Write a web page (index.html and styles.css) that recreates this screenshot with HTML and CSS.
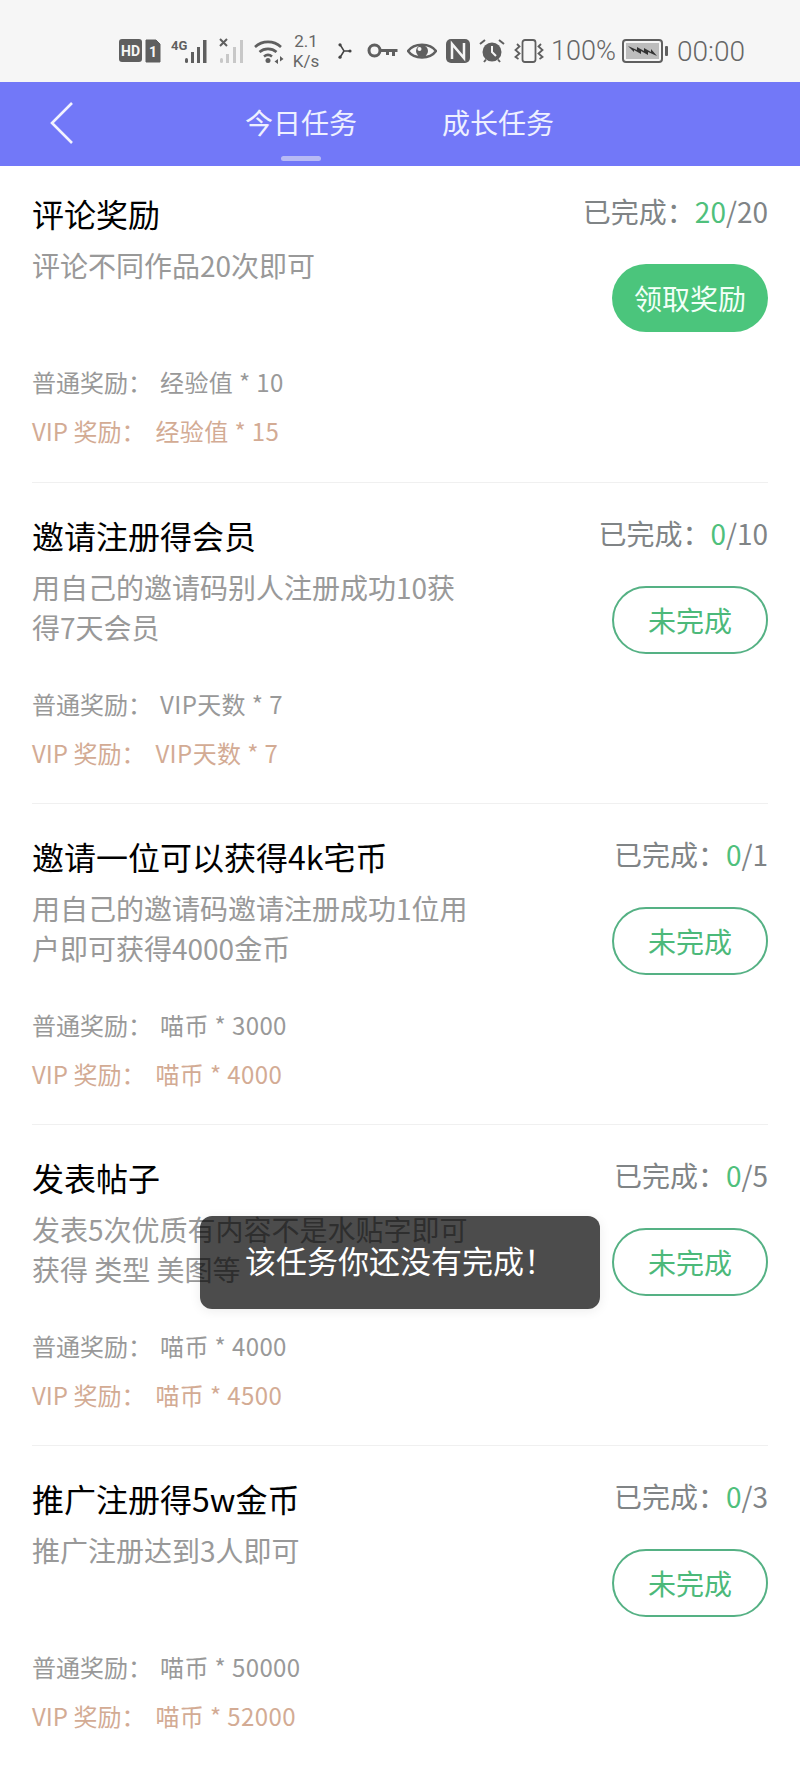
FILE: index.html
```html
<!DOCTYPE html>
<html lang="zh-CN">
<head>
  <meta charset="UTF-8">
  <title>任务</title>
  <link rel="stylesheet" href="styles.css">
</head>
<body>

  <div class="statusbar">
    <svg class="ic-hd" width="42" height="24" viewBox="0 0 42 24">
      <rect x="0" y="0" width="23" height="23" rx="3" fill="#5f5f5f"/>
      <text x="11.5" y="17" class="ic-text" font-size="14" fill="#f6f6f6" text-anchor="middle">HD</text>
      <path d="M27 1h10l4 4v18H27z" fill="#5f5f5f" stroke="#5f5f5f" stroke-linejoin="round"/>
      <text x="34" y="18" class="ic-text" font-size="14" fill="#f6f6f6" text-anchor="middle">1</text>
    </svg>
    <svg class="ic-sig" width="40" height="26" viewBox="0 0 40 26">
      <text x="0" y="12" class="ic-text" font-size="13" fill="#5f5f5f">4G</text>
      <rect x="14" y="20" width="3" height="5" rx="1.5" fill="#5f5f5f"/>
      <rect x="20" y="14" width="3" height="11" fill="#5f5f5f"/>
      <rect x="26" y="9" width="3" height="16" fill="#5f5f5f"/>
      <rect x="32" y="2" width="3.5" height="23" fill="#5f5f5f"/>
    </svg>
    <svg class="ic-sig2" width="27" height="26" viewBox="0 0 27 26">
      <path d="M1 1l7 7M8 1l-7 7" stroke="#5f5f5f" stroke-width="2"/>
      <rect x="1" y="20" width="3" height="5" rx="1.5" fill="#c8c8c8"/>
      <rect x="7" y="16" width="3" height="9" fill="#c8c8c8"/>
      <rect x="14" y="9" width="3" height="16" fill="#c8c8c8"/>
      <rect x="21" y="2" width="3" height="23" fill="#c8c8c8"/>
    </svg>
    <svg class="ic-wifi" width="30" height="26" viewBox="0 0 30 26">
      <path d="M1 9a19 19 0 0 1 26 0M5.500 14a13 13 0 0 1 17 0M10 18.500a6.500 6.500 0 0 1 8 0" fill="none" stroke="#5f5f5f" stroke-width="2.600"/>
      <circle cx="14" cy="22.500" r="2.500" fill="#5f5f5f"/>
      <path d="M24 21l-3.500 2.500 3.500 2.500zM26 18v5.500l3.500-2.500z" fill="#5f5f5f"/>
    </svg>
    <div class="net-speed"><span>2.1</span><span>K/s</span></div>
    <svg class="ic-branch" width="15" height="16" viewBox="0 0 15 16">
      <path d="M3 1.500l4 6.500h6M7 8l-4 6.500" fill="none" stroke="#444" stroke-width="1.500"/>
      <circle cx="3" cy="1.800" r="1.600" fill="#444"/>
      <circle cx="13" cy="8" r="1.600" fill="#444"/>
      <circle cx="3" cy="14.200" r="1.600" fill="#444"/>
    </svg>
    <svg class="ic-key" width="31" height="16" viewBox="0 0 31 16">
      <circle cx="7.500" cy="7.500" r="5.500" fill="none" stroke="#5f5f5f" stroke-width="3"/>
      <path d="M13 6h17.500v3H28v4h-3V9h-3v3h-3V9h-6z" fill="#5f5f5f"/>
    </svg>
    <svg class="ic-eye" width="30" height="20" viewBox="0 0 30 20">
      <path d="M1 10C7 1.500 23 1.500 29 10 23 18.500 7 18.500 1 10z" fill="none" stroke="#5f5f5f" stroke-width="2.500"/>
      <circle cx="15" cy="10" r="6" fill="#5f5f5f"/>
      <circle cx="12.500" cy="8" r="2" fill="#f6f6f6"/>
    </svg>
    <svg class="ic-nfc" width="24" height="24" viewBox="0 0 24 24">
      <rect width="24" height="24" rx="5" fill="#5f5f5f"/>
      <path d="M6 20V5l12 14V4" fill="none" stroke="#f6f6f6" stroke-width="2.500"/>
    </svg>
    <svg class="ic-alarm" width="26" height="24" viewBox="0 0 26 24">
      <circle cx="13" cy="13" r="9.500" fill="#5f5f5f"/>
      <path d="M1 5l5-4M25 5l-5-4M5 23l2-2.500M21 23l-2-2.500" stroke="#5f5f5f" stroke-width="2"/>
      <path d="M13 7v6l4 4" fill="none" stroke="#f6f6f6" stroke-width="2"/>
    </svg>
    <svg class="ic-vib" width="30" height="24" viewBox="0 0 30 24">
      <rect x="8.500" y="1" width="13" height="22" rx="2.500" fill="none" stroke="#5f5f5f" stroke-width="1.800"/>
      <path d="M3 5l2.500 2.500L1.500 11l4 3.500L1.500 18l3 2M27 5l-2.500 2.500 4 3.500-4 3.500 4 3.500-3 2" fill="none" stroke="#5f5f5f" stroke-width="1.800"/>
    </svg>
    <span class="battery-pct">100%</span>
    <svg class="ic-battery" width="46" height="24" viewBox="0 0 46 24">
      <rect x="1" y="1" width="39" height="22" rx="3" fill="none" stroke="#5f5f5f" stroke-width="2"/>
      <rect x="4" y="4" width="33" height="16" fill="#bdbdbd"/>
      <rect x="43" y="7" width="3" height="10" rx="1" fill="#5f5f5f"/>
      <path d="M6 7l9 4 0-3 7 4 0-3 7 4 0-3 6 7-9-4 0 3-7-4 0 3-7-4 0 2z" fill="#333"/>
    </svg>
    <span class="clock">00:00</span>
  </div>

  <div class="navbar">
    <svg class="back" width="24" height="44" viewBox="0 0 24 44">
      <path d="M22 2L2 22l20 20" fill="none" stroke="#f2f3ff" stroke-width="2.600"/>
    </svg>
    <div class="tab tab-active">今日任务</div>
    <div class="tab">成长任务</div>
  </div>

  <div class="task-list">

    <div class="task">
      <div class="task-main">
        <h4>评论奖励</h4>
        <p class="desc">评论不同作品20次即可</p>
        <div class="reward">普通奖励&#xFF1A;<span>经验值 * 10</span></div>
        <div class="reward reward-vip">VIP 奖励&#xFF1A;<span>经验值 * 15</span></div>
      </div>
      <div class="task-side">
        <div class="progress">已完成&#xFF1A;<em>20</em>/20</div>
        <button class="btn btn-done">领取奖励</button>
      </div>
    </div>

    <div class="task">
      <div class="task-main">
        <h4>邀请注册得会员</h4>
        <p class="desc">用自己的邀请码别人注册成功10获得7天会员</p>
        <div class="reward">普通奖励&#xFF1A;<span>VIP天数 * 7</span></div>
        <div class="reward reward-vip">VIP 奖励&#xFF1A;<span>VIP天数 * 7</span></div>
      </div>
      <div class="task-side">
        <div class="progress">已完成&#xFF1A;<em>0</em>/10</div>
        <button class="btn">未完成</button>
      </div>
    </div>

    <div class="task">
      <div class="task-main">
        <h4>邀请一位可以获得4k宅币</h4>
        <p class="desc">用自己的邀请码邀请注册成功1位用户即可获得4000金币</p>
        <div class="reward">普通奖励&#xFF1A;<span>喵币 * 3000</span></div>
        <div class="reward reward-vip">VIP 奖励&#xFF1A;<span>喵币 * 4000</span></div>
      </div>
      <div class="task-side">
        <div class="progress">已完成&#xFF1A;<em>0</em>/1</div>
        <button class="btn">未完成</button>
      </div>
    </div>

    <div class="task">
      <div class="task-main">
        <h4>发表帖子</h4>
        <p class="desc">发表5次优质有内容不是水贴字即可<br>获得 类型 美图等</p>
        <div class="reward">普通奖励&#xFF1A;<span>喵币 * 4000</span></div>
        <div class="reward reward-vip">VIP 奖励&#xFF1A;<span>喵币 * 4500</span></div>
      </div>
      <div class="task-side">
        <div class="progress">已完成&#xFF1A;<em>0</em>/5</div>
        <button class="btn">未完成</button>
      </div>
    </div>

    <div class="task">
      <div class="task-main">
        <h4>推广注册得5w金币</h4>
        <p class="desc">推广注册达到3人即可</p>
        <div class="reward">普通奖励&#xFF1A;<span>喵币 * 50000</span></div>
        <div class="reward reward-vip">VIP 奖励&#xFF1A;<span>喵币 * 52000</span></div>
      </div>
      <div class="task-side">
        <div class="progress">已完成&#xFF1A;<em>0</em>/3</div>
        <button class="btn">未完成</button>
      </div>
    </div>

  </div>

  <div class="toast">该任务你还没有完成&#xFF01;</div>

</body>
</html>
```

FILE: styles.css
```css
body {
  background-color: #fff;
  font-family: "Noto Sans CJK SC", "Noto Sans", sans-serif;
  margin: 0;
  padding: 0;
  position: relative;
  height: 1778px;
  overflow: hidden;
}

.statusbar {
  background-color: #f6f6f6;
  height: 82px;
  box-sizing: border-box;
  padding: 20px 55px 0 0;
  display: flex;
  justify-content: flex-end;
  align-items: center;
  color: #666;
  font-family: Roboto, sans-serif;
}

.ic-text {
  font-family: Roboto, sans-serif;
  font-weight: 700;
}

.ic-sig { margin-left: 10px; }
.ic-sig2 { margin-left: 8px; }
.ic-wifi { margin-left: 8px; }
.ic-branch { margin-left: 17px; }
.ic-key { margin-left: 15px; }
.ic-eye { margin-left: 9px; }
.ic-nfc { margin-left: 9px; }
.ic-alarm { margin-left: 9px; }
.ic-vib { margin-left: 9px; }
.ic-battery { margin-left: 6px; }

.net-speed {
  margin-left: 8px;
  width: 28px;
  display: flex;
  flex-direction: column;
  align-items: center;
  font-size: 17px;
  line-height: 20px;
}

.battery-pct {
  margin-left: 7px;
  font-size: 27px;
  font-weight: 300;
}

.clock {
  margin-left: 9px;
  font-size: 28px;
  font-weight: 300;
}

.navbar {
  background-color: #7278f8;
  height: 84px;
  display: flex;
  align-items: flex-start;
  gap: 85px;
  padding-left: 245px;
  position: relative;
}

.back {
  position: absolute;
  left: 50px;
  top: 19px;
}

.tab {
  color: #eef0ff;
  font-size: 28px;
  line-height: 80px;
  height: 84px;
  position: relative;
}

.tab-active::after {
  content: "";
  position: absolute;
  left: 36px;
  bottom: 5px;
  width: 40px;
  height: 5px;
  border-radius: 3px;
  background-color: #b7baf5;
}

.task-list {
  padding: 0 32px;
}

.task {
  height: 321px;
  border-bottom: 1px solid #f0f0f0;
  padding-top: 32px;
  box-sizing: border-box;
  display: flex;
  justify-content: space-between;
}

.task:first-child {
  height: 317px;
  padding-top: 27px;
}

.task:last-child {
  border-bottom: 0;
}

.task-main {
  width: 440px;
}

.task-main h4 {
  margin: 0;
  font-size: 32px;
  line-height: 40px;
  font-weight: 400;
  color: #000;
}

.desc {
  margin: 12px 0 32px;
  height: 80px;
  font-size: 28px;
  line-height: 40px;
  color: #999;
}

.reward {
  font-size: 24px;
  line-height: 49px;
  color: #999;
}

.reward span {
  margin-left: 8px;
  letter-spacing: 0.4px;
}

.reward-vip {
  color: #d3ab94;
}

.reward-vip span {
  margin-left: 10px;
}

.task-side {
  display: flex;
  flex-direction: column;
  align-items: flex-end;
}

.progress {
  font-size: 28px;
  line-height: 36px;
  color: #808486;
}

.progress em {
  font-style: normal;
  color: #4fc07c;
}

.btn {
  margin-top: 35px;
  width: 156px;
  height: 68px;
  border: 2px solid #55b184;
  border-radius: 34px;
  background: #fff;
  color: #4cb97a;
  font-family: inherit;
  font-size: 28px;
  padding: 0;
}

.btn-done {
  border: 0;
  background: #4bc57c;
  color: #f2fff7;
}

.toast {
  position: absolute;
  left: 200px;
  top: 1216px;
  width: 400px;
  height: 93px;
  border-radius: 12px;
  background-color: rgba(0, 0, 0, 0.7);
  color: #fff;
  font-size: 31px;
  line-height: 88px;
  text-align: center;
  box-shadow: 0 2px 12px rgba(0, 0, 0, 0.08);
}
```
